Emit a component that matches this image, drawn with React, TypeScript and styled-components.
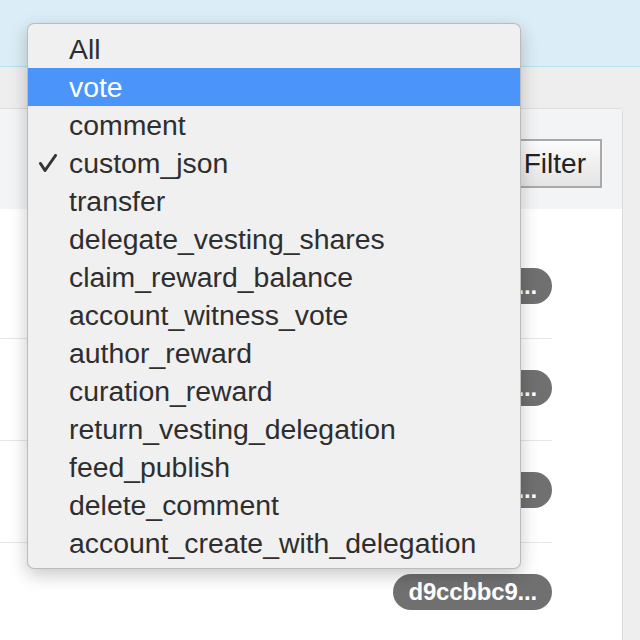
import React from "react";
import styled, { createGlobalStyle } from "styled-components";

const Global = createGlobalStyle`
  html, body { margin: 0; padding: 0; }
  body { font-family: "Liberation Sans", Arial, sans-serif; }
`;

const Page = styled.div`
  position: relative;
  width: 640px;
  height: 640px;
  overflow: hidden;
  background: #eeeeee;
  display: flex;
  flex-direction: column;
`;

const TopBar = styled.div`
  height: 66px;
  flex: none;
  background: #dbedf6;
  border-bottom: 1px solid #b6e1ea;
`;

const Content = styled.div`
  flex: 1;
  padding: 41px 17px 0 0;
  margin-left: -10px;
`;

const Card = styled.div`
  background: #ffffff;
  border: 1px solid #dcdcdc;
  border-radius: 4px;
  height: 620px;
  overflow: hidden;
`;

const CardHeader = styled.div`
  height: 100px;
  background: #f3f4f6;
  display: flex;
  justify-content: flex-end;
  align-items: flex-start;
  padding: 30px 20px 0 0;
  box-sizing: border-box;
`;

const FilterButton = styled.button`
  height: 49px;
  padding: 0 14px;
  border: 2px solid #a9a9a9;
  background: linear-gradient(#fbfbfb, #e4e4e4);
  font-family: "Liberation Sans", Arial, sans-serif;
  font-size: 28px;
  color: #222;
`;

const Table = styled.div`
  padding-right: 70px;
  display: flex;
  flex-direction: column;
`;

const HeadRow = styled.div`
  height: 28px;
`;

const Row = styled.div`
  height: 102px;
  border-bottom: 1px solid #e6e6e6;
  display: flex;
  justify-content: flex-end;
  align-items: flex-start;
  padding-top: 31px;
  box-sizing: border-box;
`;

const Pill = styled.span`
  height: 36px;
  line-height: 36px;
  padding: 0 15px;
  border-radius: 18px;
  background: #707070;
  color: #ffffff;
  font-family: "Liberation Sans", Arial, sans-serif;
  font-weight: 700;
  font-size: 24px;
  letter-spacing: -0.2px;
`;

const Menu = styled.ul`
  position: absolute;
  left: 27px;
  top: 23px;
  width: 494px;
  box-sizing: border-box;
  margin: 0;
  padding: 6px 0;
  list-style: none;
  background: #f0f0f0;
  border: 1px solid rgba(0, 0, 0, 0.22);
  border-radius: 7px;
  box-shadow: 0 6px 18px rgba(0, 0, 0, 0.22);
`;

const Item = styled.li<{ $active?: boolean }>`
  position: relative;
  height: 38px;
  line-height: 39px;
  padding-left: 41px;
  font-size: 28.4px;
  font-family: "Liberation Sans", Arial, sans-serif;
  color: ${(p) => (p.$active ? "#ffffff" : "#2e2e2e")};
  background: ${(p) => (p.$active ? "#4a94fa" : "transparent")};
  white-space: nowrap;
`;

const Check = styled.svg`
  position: absolute;
  left: 10px;
  top: 10px;
`;

const items = [
  "All",
  "vote",
  "comment",
  "custom_json",
  "transfer",
  "delegate_vesting_shares",
  "claim_reward_balance",
  "account_witness_vote",
  "author_reward",
  "curation_reward",
  "return_vesting_delegation",
  "feed_publish",
  "delete_comment",
  "account_create_with_delegation",
];

const pills = ["4f1a2e7b...", "b83c0d51...", "7e2af9c0...", "d9ccbbc9..."];

export default function App() {
  return (
    <>
      <Global />
      <Page>
        <TopBar />
        <Content>
          <Card>
            <CardHeader>
              <FilterButton>Filter</FilterButton>
            </CardHeader>
            <Table>
              <HeadRow />
              {pills.map((p) => (
                <Row key={p}>
                  <Pill>{p}</Pill>
                </Row>
              ))}
            </Table>
          </Card>
        </Content>
        <Menu>
          {items.map((it) => (
            <Item key={it} $active={it === "vote"}>
              {it === "custom_json" && (
                <Check width="20" height="20" viewBox="0 0 20 20">
                  <path
                    d="M2.5 9.5 L7 16.5 L17.5 1.5"
                    fill="none"
                    stroke="#333"
                    strokeWidth="3"
                    strokeLinecap="round"
                    strokeLinejoin="round"
                  />
                </Check>
              )}
              {it}
            </Item>
          ))}
        </Menu>
      </Page>
    </>
  );
}
